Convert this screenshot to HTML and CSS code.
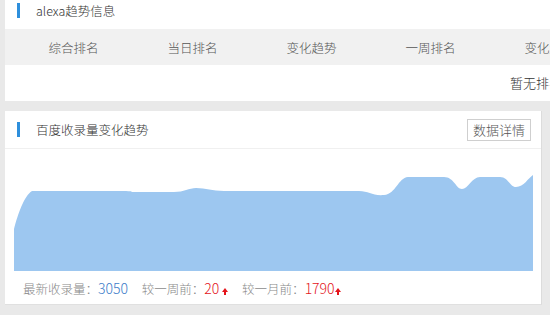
FILE: index.html
```html
<!DOCTYPE html>
<html lang="zh-CN">
<head>
    <meta charset="UTF-8">
    <title>收录趋势</title>
    <link rel="stylesheet" href="styles.css">
</head>
<body>

<div class="page">
    <div class="box box-alexa">
        <div class="box-head">
            <span class="mark"></span>
            <span class="box-title">alexa趋势信息</span>
        </div>
        <div class="rank-head">
            <span>综合排名</span>
            <span>当日排名</span>
            <span>变化趋势</span>
            <span>一周排名</span>
            <span>变化趋势</span>
            <span>一月排名</span>
            <span>变化趋势</span>
            <span>三月排名</span>
            <span>变化趋势</span>
        </div>
        <div class="rank-empty">暂无排名数据</div>
    </div>

    <div class="box box-baidu">
        <div class="box-head line">
            <span class="mark"></span>
            <span class="box-title">百度收录量变化趋势</span>
            <a class="detail-btn" href="#">数据详情</a>
        </div>
        <div class="chart">
            <svg width="519" height="100" viewBox="0 0 519 100">
                <path fill="#9dc7f0" d="M0 55 C4 40 10 22 18 17 L100 17 C130 17 110 18 120 18 L160 18 C170 18 175 14 182 14 C192 14 198 17 210 17 L345 17 C355 17 358 22 370 21 C382 20 384 4 394 3 L430 3 C440 3 442 15 448 15 C454 15 458 3 466 3 L486 3 C494 3 496 13 502 13 C510 13 514 4 519 1 L519 97 L0 97 Z"/>
            </svg>
        </div>
        <div class="stats">
            最新收录量：<span class="num">3050</span>
            <span class="gap"></span>较一周前：<span class="up">20 <i class="arrow"></i></span>
            <span class="gap"></span>较一月前：<span class="up">1790<i class="arrow"></i></span>
        </div>
    </div>
</div>

</body>
</html>
```

FILE: styles.css
```css
html, body { margin: 0; padding: 0; }
body { background: #e9e9e9; font-family: "Noto Sans CJK SC", "Noto Sans", sans-serif; color: #333; overflow: hidden; width: 550px; height: 315px; }
.page { padding-left: 5px; display: flex; flex-direction: column; gap: 10px; }
.box { background: #fff; }
.box-alexa { width: 1100px; height: 101px; }
.box-baidu { width: 536px; height: 193px; border-right: 1px solid #dcdcdc; border-bottom: 1px solid #e0e0e0; }
.box-head { display: flex; align-items: center; padding-left: 12px; }
.box-alexa .box-head { height: 29px; margin-top: -4px; padding-bottom: 4px; }
.box-head.line { height: 37px; border-bottom: 1px solid #f0f0f0; }
.mark { width: 3px; height: 15px; background: #2e8fdc; margin-right: 16px; }
.box-title { font-size: 12.5px; color: #333; font-weight: 300; }
.detail-btn { margin-left: auto; margin-right: 10px; font-size: 13px; color: #555; text-decoration: none; border: 1px solid #cfcfcf; padding: 0 5px; height: 20px; line-height: 20px; font-weight: 300; }
.rank-head { display: flex; height: 36px; align-items: center; background: #f1f1f1; padding-left: 9px; font-size: 12.5px; color: #555; font-weight: 300; }
.rank-head span { flex: 0 0 119px; text-align: center; }
.rank-empty { height: 36px; line-height: 36px; padding-left: 505px; font-size: 13px; color: #333; font-weight: 300; }
.chart { padding: 25px 0 0 9px; height: 97px; overflow: hidden; }
.chart svg { display: block; }
.stats { font-size: 12.5px; color: #888; padding: 7px 0 0 18px; font-weight: 300; }
.num { color: #3d7cc9; font-size: 14px; }
.up { color: #e4141b; font-size: 14px; }
.gap { display: inline-block; width: 11px; }
.arrow { display: inline-block; width: 0; height: 0; border-left: 3px solid transparent; border-right: 3px solid transparent; border-bottom: 4px solid #e4141b; position: relative; top: -2px; }
.arrow::after { content: ""; position: absolute; left: -1px; top: 4px; width: 2px; height: 3px; background: #e4141b; }
```
